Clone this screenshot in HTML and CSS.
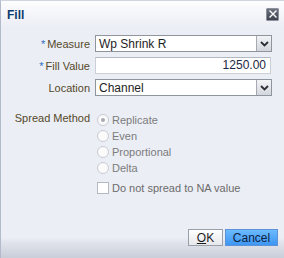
FILE: index.html
```html
<!DOCTYPE html>
<html lang="en">
<head>
    <meta charset="UTF-8">
    <title>Fill</title>
    <link rel="stylesheet" href="styles.css">
</head>
<body>
    <div class="dialog">
        <div class="dialog-header">
            <span class="dialog-title">Fill</span>
            <button class="close-button" title="Close">
                <svg width="8" height="8" viewBox="0 0 8 8"><path d="M0.5 0.5 L7.5 7.5 M7.5 0.5 L0.5 7.5" stroke="#fff" stroke-width="1.4"/></svg>
            </button>
        </div>

        <div class="form">
            <label class="field-label"><span class="required">*</span>Measure</label>
            <div class="select">
                <span class="select-value">Wp Shrink R</span>
                <span class="select-button">
                    <svg width="9" height="6" viewBox="0 0 9 6"><path d="M1 1 L4.5 4.5 L8 1" fill="none" stroke="#2b2f36" stroke-width="1.8"/></svg>
                </span>
            </div>

            <label class="field-label"><span class="required">*</span>Fill Value</label>
            <div class="input">1250.00</div>

            <label class="field-label">Location</label>
            <div class="select">
                <span class="select-value">Channel</span>
                <span class="select-button">
                    <svg width="9" height="6" viewBox="0 0 9 6"><path d="M1 1 L4.5 4.5 L8 1" fill="none" stroke="#2b2f36" stroke-width="1.8"/></svg>
                </span>
            </div>

            <label class="field-label spread-label">Spread Method</label>
            <div class="options">
                <label class="option"><input type="radio" name="spread" checked disabled> Replicate</label>
                <label class="option"><input type="radio" name="spread" disabled> Even</label>
                <label class="option"><input type="radio" name="spread" disabled> Proportional</label>
                <label class="option"><input type="radio" name="spread" disabled> Delta</label>
                <label class="option check"><input type="checkbox"> Do not spread to NA value</label>
            </div>
        </div>

        <div class="dialog-footer">
            <button class="btn"><u>O</u>K</button>
            <button class="btn btn-primary">Cancel</button>
        </div>
    </div>
</body>
</html>
```

FILE: styles.css
```css
body {
    margin: 0;
    font-family: "Liberation Sans", Arial, sans-serif;
    font-size: 11px;
}
.dialog {
    width: 284px;
    height: 258px;
    box-sizing: border-box;
    border-left: 1px solid #b3bacb;
    border-top: 1px solid #d0d4de;
    display: flex;
    flex-direction: column;
    background: linear-gradient(to bottom, #fdfdfe 0, #ebeef5 26px, #ebeef5 237px, #e1e4ec 241px, #d5d9e2 249px, #c8ccd7 258px);
}
.dialog-header {
    height: 25px;
    display: flex;
    align-items: center;
    justify-content: space-between;
    padding: 0 5px 0 6px;
}
.dialog-title {
    font-size: 12px;
    font-weight: bold;
    color: #0d3b6b;
    margin-top: 3px;
}
.close-button {
    width: 13px;
    height: 13px;
    padding: 0;
    margin-top: 1px;
    border: 1px solid #8c919c;
    border-radius: 1px;
    background: linear-gradient(to bottom, #6b717e, #3e4350);
    display: flex;
    align-items: center;
    justify-content: center;
}

/* Formular */
.form {
    display: grid;
    grid-template-columns: 89px 177px;
    column-gap: 5px;
    row-gap: 5px;
    padding-top: 9px;
    align-items: center;
}
.field-label {
    text-align: right;
    color: #55492a;
    white-space: nowrap;
}
.required {
    color: #2f6fbe;
    margin-right: 2px;
}
.select {
    height: 17px;
    box-sizing: border-box;
    border: 1px solid #8f959e;
    background: #fff;
    display: flex;
    align-items: center;
}
.select-value {
    flex-grow: 1;
    padding-left: 3px;
    color: #1e1e1e;
    font-size: 12px;
}
.select-button {
    width: 15px;
    height: 15px;
    box-sizing: border-box;
    border-left: 1px solid #a4a9b2;
    background: linear-gradient(to bottom, #f3f4f6, #d3d6dc);
    display: flex;
    align-items: center;
    justify-content: center;
}
.input {
    height: 17px;
    box-sizing: border-box;
    border: 1px solid #cbd0d8;
    border-top-color: #b3b9c3;
    background: #fff;
    text-align: right;
    padding-right: 4px;
    line-height: 15px;
    font-size: 12px;
    color: #1b2742;
    margin-right: 1px;
}
.spread-label {
    align-self: start;
    margin-top: 11px;
}
.options {
    margin-top: 11px;
    padding-left: 2px;
    display: flex;
    flex-direction: column;
}
.option {
    height: 16px;
    display: flex;
    align-items: center;
    gap: 3px;
    color: #7c7c7c;
}
.option input {
    appearance: none;
    margin: 0;
    width: 12px;
    height: 12px;
    border: 1px solid #c6cad2;
    border-radius: 50%;
    background: #fbfbfc;
    display: flex;
    align-items: center;
    justify-content: center;
}
.option input:checked::after {
    content: "";
    width: 4px;
    height: 4px;
    border-radius: 50%;
    background: #a8abb1;
}
.option.check {
    height: 14px;
    margin-top: 5px;
    color: #6b6b6b;
}
.option.check input {
    border-radius: 0;
    border-color: #b5b9c1;
    background: #fff;
}

/* Schaltflächen */
.dialog-footer {
    margin-top: auto;
    display: flex;
    justify-content: flex-end;
    gap: 2px;
    padding: 0 6px 12px 0;
}
.btn {
    height: 17px;
    padding: 0;
    font-family: inherit;
    font-size: 12px;
    border: 1px solid #9aa0aa;
    background: linear-gradient(to bottom, #ffffff, #e6e8ec);
    color: #1d1d1d;
    width: 35px;
}
.btn u {
    text-decoration-color: #1d1d1d;
}
.btn-primary {
    width: 53px;
    border-color: #5b93d6;
    background: linear-gradient(to bottom, #6cbaff, #3d96f2);
    color: #0c2340;
}
```
